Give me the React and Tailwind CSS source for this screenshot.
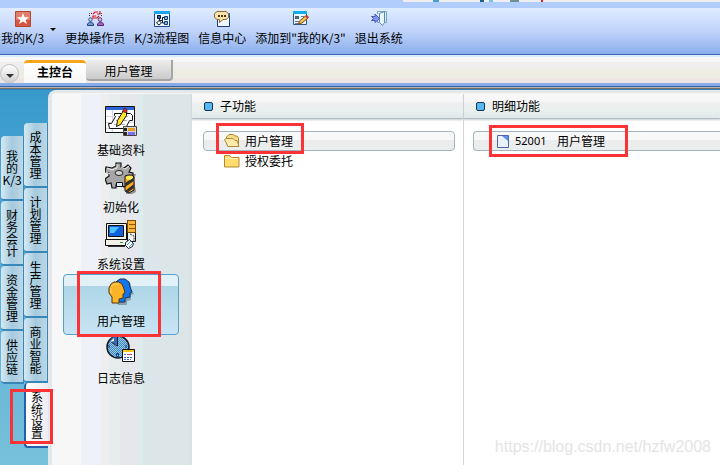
import { useState } from 'react'

function StarIcon() {
  return (
    <svg width="16" height="16" viewBox="0 0 16 16">
      <rect width="16" height="16" rx="1" fill="#b8432f" />
      <rect x="1" y="1" width="14" height="14" fill="#e0806c" />
      <rect x="1" y="9" width="14" height="6" fill="#d4573f" />
      <path d="M8 2l1.6 4.2H14l-3.4 2.7L12 13l-4-2.5L4 13l1.4-4.1L2 6.2h4.4z" fill="#fff" />
    </svg>
  )
}

function SwitchUserIcon() {
  return (
    <svg width="17" height="16" viewBox="0 0 17 16">
      <path d="M2.500 5V2.500H6M12 2.500h2.500V6" stroke="#333" strokeDasharray="1 1" fill="none" />
      <path d="M6 3l2-2h3M13 0v3h-3M12 5l-2 2H7M6 8V5h3" stroke="#e8151c" strokeWidth="1.200" fill="none" />
      <circle cx="3.500" cy="8.500" r="1.800" fill="#b9cbe5" stroke="#44608c" />
      <path d="M.5 14.500V13l2-2h2l2 2v1.500z" fill="#6c9bd5" stroke="#263f7c" />
      <circle cx="13" cy="8.500" r="1.800" fill="#d7c2df" stroke="#5b3d79" />
      <path d="M10.500 14.500V13l2-2h2l2 2v1.500z" fill="#a862bd" stroke="#4c2578" />
    </svg>
  )
}

function FlowIcon() {
  return (
    <svg width="16" height="16" viewBox="0 0 16 16">
      <path d="M.5.5h15v15H.5z" fill="#f4fbff" stroke="#1c4690" />
      <path d="M0 0h16v3H0z" fill="#19a5ed" />
      <path d="M5.500 6v3.500h3V12H10M8.500 9.500V6.500H10M5 9.500l-2.500 2.500L5 14l2.500-2z" fill="none" stroke="#06152e" />
      <path d="M3.500 4.500h3v3h-3z" fill="#3c63b8" stroke="#06152e" />
      <path d="M10.500 5.500h3v3h-3zM10.500 10.500h3v3h-3z" fill="#75bbed" stroke="#16366e" />
    </svg>
  )
}

function MessageIcon() {
  return (
    <svg width="17" height="16" viewBox="0 0 17 16">
      <path d="M3.500 2.500h12v13h-12z" fill="#f1f7ff" stroke="#1c3f7a" />
      <path d="M12 2h4v3h-4z" fill="#2367bd" />
      <path d="M3 .5h9l2.500 2v4l-2.500 2H9L5.500 11.500V8.500H3L.5 6.500v-4z" fill="#fae3aa" stroke="#8b6a36" />
      <path d="M4 4h2v2H4zM7 4h2v2H7zM10 4h2v2h-2z" fill="#4a371d" />
    </svg>
  )
}

function AddNoteIcon() {
  return (
    <svg width="16" height="15" viewBox="0 0 16 15">
      <path d="M.5.5h13v13H.5z" fill="#eef7ff" stroke="#34577f" />
      <path d="M0 0h14v3H0z" fill="#12aeea" />
      <path d="M2 5h4v3H2z" fill="#526276" />
      <path d="M8 5.500h3M2 10.500h4M2 12.500h3" stroke="#627997" />
      <path d="M5.500 13l1-3 6-5 2.500 2-6 5z" fill="#efc44e" stroke="#7c4b1a" />
      <path d="M12 5.500l2-1.500 2 2-1.500 2z" fill="#cf3b38" />
    </svg>
  )
}

function ExitIcon() {
  return (
    <svg width="16" height="16" viewBox="0 0 16 16">
      <path d="M6.500 3V.5h9v11H13M8 11.500H6.500V10" fill="none" stroke="#7aa5bd" />
      <path d="M8.500 2.500l5-2v11l-2 3-3-3z" fill="#e5f5fa" stroke="#5d8da7" />
      <path d="M.5 5.500H4V3l4.500 4.500-4.500 4V9.500H.5l2-2z" fill="#8295f1" stroke="#4658b5" />
    </svg>
  )
}

function BaseDataIcon() {
  return (
    <svg width="32" height="31" viewBox="0 0 32 31">
      <path d="M.5.5h29v26H.5z" fill="#fff" stroke="#111" />
      <path d="M1 1h28v3H1z" fill="#2b65d5" />
      <path d="M1 10.500h28M1 16.500h28M1 22.500h28M7.500 4v22" stroke="#d4d8e2" />
      <path d="M9.500 7.500h16l2 2v5h-3l-4 8H4.500l-1-5h3l4-7-1-1z" fill="#fff" stroke="#111" />
      <path d="M13 10.500h10M11 14.500h11M9 18.500h11" stroke="#aaa" />
      <path d="M11.500 20.500l1-6 6-10 3 2v3l-6 9z" fill="#ffe32c" stroke="#111" />
      <path d="M17.500 5.500l1.500-3 3 1v3.500z" fill="#e72f2e" stroke="#111" strokeWidth=".6" />
      <path d="M18.500 20.500h13v9h-13z" fill="#d9d6cf" stroke="#444" />
      <path d="M19 22h3v3h-3zM19 26h3v3h-3z" fill="#222" />
      <path d="M23 22h7v3h-7z" fill="#e59a20" />
      <path d="M23 26h7v3h-7z" fill="#7a70f0" />
    </svg>
  )
}

function InitIcon() {
  return (
    <svg width="32" height="32" viewBox="0 0 32 32">
      <path d="M24 12h7l-2 6 2 12-4 2h-6z" fill="#8e9396" />
      <path d="M11 1h5v4l3 1 4-3 3 3-2 4 4 1v5l-5 1-2 2 2 4-4 2-4-3-4 1v3H7l-1-5-4 1-2-5 4-3V11L0 10l1-5 6 1 4-2z" fill="#a6a6a6" stroke="#111" strokeWidth="1.200" />
      <path d="M12 2v4l-5 2-5-2M16 5l4 2 4-3M5 12l-4-2" fill="none" stroke="#eee" />
      <ellipse cx="14" cy="11" rx="4" ry="2.500" fill="#d2d2d2" stroke="#222" />
      <path d="M11.500 20.500h6v4h-6z" fill="#dce7f8" stroke="#111" />
      <path d="M20 14l3-1h4l2 2v13l-5 3-4-2z" fill="#ffae18" stroke="#161616" />
      <path d="M20 21l9-6v4l-9 6M20 29l9-7v4l-7 5" fill="#333" />
      <path d="M21 15l3-1h3l1 2-3 2-4-1z" fill="#fff15a" />
    </svg>
  )
}

function SystemIcon() {
  return (
    <svg width="32" height="30" viewBox="0 0 32 30">
      <path d="M22.500.5h8v21h-8z" fill="#eef1f3" stroke="#111" />
      <path d="M22.500.5h8v12h-8z" fill="#f9b43a" stroke="#7a4a00" />
      <path d="M24 4.500h6M24 8.500h6" stroke="#915000" />
      <path d="M1.500 3.500h20v16h-20zM.5 19.500h22v6H.5z" fill="#f4f2e8" stroke="#111" />
      <path d="M3.500 5.500h15v11h-15z" fill="#1262df" stroke="#111" />
      <path d="M5 7h9l-5 6H5z" fill="#4dc2ff" />
      <path d="M15 22h3v1h-3z" fill="#18a33c" />
      <path d="M3 26h17v1H3z" fill="#333" />
      <path d="M25 14l4 2v5l-4 1" fill="none" stroke="#333" strokeDasharray="2 1" />
      <path d="M20.500 22.500l4-3 4 4-1 3-4 2-3-3z" fill="#fff" stroke="#1c2440" />
      <path d="M22 25l4-4M24 27l4-4" stroke="#47a4d5" />
    </svg>
  )
}

function UsersIcon() {
  return (
    <svg width="26" height="28" viewBox="0 0 26 28">
      <path d="M8 4l4-3h7l3 3v5l3 5-3 1v5l-4 1v4H9z" fill="#555" opacity=".45" transform="translate(1 2)" />
      <path d="M6 7l3-4 3-2h5l4 3 1 5 2 5-2 1v4l-5 1v4H8z" fill="#1476ed" stroke="#123660" />
      <path d="M3 6l3-2h5l3 2 2 5 1 4-2 1v4l-4 1v4H4v-6l-3-4v-5z" fill="#ffb329" stroke="#4c350b" />
      <path d="M3 8l4-2h4M3 10v5" fill="none" stroke="#ffd56b" />
    </svg>
  )
}

function LogIcon() {
  return (
    <svg width="30" height="28" viewBox="0 0 30 28">
      <defs>
        <pattern id="dial" width="2" height="2" patternUnits="userSpaceOnUse">
          <path d="M0 0h2v2H0z" fill="#8fc8ee" />
          <path d="M0 0h1v1H0zM1 1h1v1H1z" fill="#4a88b4" />
        </pattern>
      </defs>
      <circle cx="12" cy="12" r="11" fill="url(#dial)" stroke="#111827" strokeWidth="1.500" />
      <path d="M11.500 2v9L4 5l3-3z" fill="#3869b5" />
      <path d="M11.500 2v9M4 6l7 5" stroke="#17233d" />
      <path d="M4 7l4-4v3z" fill="#fff" />
      <path d="M3 10v3M20 10v3M10.500 18.500h2v3h-2z" stroke="#153b82" fill="none" />
      <path d="M16.500 14.500h12v12h-12z" fill="#fff" stroke="#111" />
      <path d="M17 15h11v2H17z" fill="#f6c71e" />
      <path d="M18 19.500h9M18 22.500h9M18 24.500h7" stroke="#4862d8" strokeDasharray="2 1" />
      <path d="M22 19h3v1h-3z" fill="#e23b36" />
    </svg>
  )
}

function FolderIcon({ open }) {
  return (
    <svg width="16" height="14" viewBox="0 0 16 14">
      {open ? (
        <>
          <path d="M2.500 6V3L5 .5h4L11 2h2l1.500 2v8h-11z" fill="#f7dd85" stroke="#ad8738" />
          <path d="M.5 5.500L2 4.500h7L11 6.500h2l2 6H4z" fill="#ffecaa" stroke="#b28a36" />
        </>
      ) : (
        <>
          <path d="M.5 1.500h5l2 2h7.500v9.500H.5z" fill="#ffdc6c" stroke="#b38a32" />
          <path d="M1.500 4.500h12" stroke="#fff5bd" />
        </>
      )}
    </svg>
  )
}

function DocIcon() {
  return (
    <svg width="12" height="13" viewBox="0 0 12 13">
      <path d="M.5.5h11v12H.5z" fill="#eaf2ff" stroke="#5264a5" />
      <path d="M5 1h6v5z" fill="#5b8ff0" />
    </svg>
  )
}

const toolbar = [
  { label: '更换操作员', Icon: SwitchUserIcon },
  { label: 'K/3流程图', Icon: FlowIcon },
  { label: '信息中心', Icon: MessageIcon },
  { label: '添加到"我的K/3"', Icon: AddNoteIcon },
  { label: '退出系统', Icon: ExitIcon },
]

const outerTabs = ['我的K/3', '财务会计', '资金管理', '供应链']
const innerTabs = ['成本管理', '计划管理', '生产管理', '商业智能', '系统设置']

const modules = [
  { label: '基础资料', Icon: BaseDataIcon },
  { label: '初始化', Icon: InitIcon },
  { label: '系统设置', Icon: SystemIcon },
  { label: '用户管理', Icon: UsersIcon },
  { label: '日志信息', Icon: LogIcon },
]

function Mark({ className }) {
  return <span className={`absolute z-10 border-3 border-[#fb3236] pointer-events-none ${className}`} />
}

function Toolbar() {
  return (
    <header>
      <div className="h-[2px] bg-[#b1cdfb] flex justify-end">
        <div className="w-[44%] bg-[#efeef1] flex">
          <span className="ml-[30px] w-[6px] bg-[#4a9cd0]" />
          <span className="ml-[41px] w-1 bg-[#17637f]" />
          <span className="ml-[5px] w-1 bg-[#76c3df]" />
          <span className="ml-[17px] w-[9px] bg-[#6a9195]" />
          <span className="ml-[22px] w-[2px] bg-[#f01b24]" />
        </div>
      </div>
      <div className="h-[6px] bg-[#b1cdfb]" />
      <div className="h-[46px] bg-linear-to-b from-[#e0edff] via-[#c0d4fa] to-[#8aadeb] flex items-start gap-[9px] pl-[1px] pt-[3px]">
        <div className="flex">
          <button className="flex flex-col items-center gap-[3px] whitespace-nowrap leading-4">
            <span className="h-4"><StarIcon /></span>
            我的K/3
          </button>
          <button aria-label="更多" className="ml-[6px] mt-[17px] h-[3px] border-x-3 border-t-3 border-x-transparent border-t-black" />
        </div>
        {toolbar.map(({ label, Icon }) => (
          <button key={label} className="flex flex-col items-center gap-[3px] whitespace-nowrap leading-4">
            <span className="h-4"><Icon /></span>
            {label}
          </button>
        ))}
      </div>
      <div className="h-px bg-[#3a65b0]" />
      <div className="h-[2px] bg-[#dceafd]" />
    </header>
  )
}

function PageTabs() {
  return (
    <nav>
      <div className="h-[26px] flex items-start pt-[3px] bg-[linear-gradient(#f7f7f9_5px,#eeeeef_5px,#eeeeef_11px,#eeede4_11px,#eeede4_21px,#efe5e3_21px)]">
        <button aria-label="菜单" className="mt-1 w-[19px] h-[19px] rounded-full border border-[#c2c2c2] bg-linear-to-b from-white to-[#d2d2d2] flex items-center justify-center">
          <span className="mt-1 border-x-4 border-t-4 border-x-transparent border-t-[#333]" />
        </button>
        <button className="ml-[5px] w-[62px] h-[23px] pb-[2px] rounded-t-sm border-t-3 border-[#f9a51b] bg-linear-to-b from-white to-[#f7f7f7] font-bold leading-4">主控台</button>
        <button className="w-[87px] h-[21px] pt-[3px] rounded-b-sm border-r-2 border-b-2 border-[#a5a5a5] bg-linear-to-b from-[#ededed] to-[#cbcbcb] leading-4">用户管理</button>
      </div>
      <div className="h-[3px] bg-[#86abe9]" />
      <div className="h-px bg-[#3a62ac]" />
      <div className="h-px bg-[#b6b5ac]" />
      <div className="h-px bg-[#756f63]" />
      <div className="h-px bg-[#3480b5]" />
    </nav>
  )
}

function SideTab({ label, active, onClick }) {
  return (
    <button
      onClick={onClick}
      className={`w-full flex items-center justify-center rounded-l-sm border-b-2 ${
        active
          ? 'bg-linear-to-r from-white to-[#ececf2] border-[#2461ac] border-l-2'
          : 'bg-linear-to-r from-[#d5e9f4] via-[#a5cade] to-[#bdd7e5] border-[#3787b8] border-r'
      }`}
    >
      <span className="w-5 leading-3">{label}</span>
    </button>
  )
}

function SideTabs() {
  const [outer, setOuter] = useState('')
  const [inner, setInner] = useState('系统设置')
  return (
    <aside className="w-12 shrink-0 flex items-start pl-[1px]">
      <div className="w-[23px] mt-[46px] grid grid-rows-[65px_65px_65px_53px]">
        {outerTabs.map((t) => <SideTab key={t} label={t} active={t === outer} onClick={() => setOuter(t)} />)}
      </div>
      <div className="relative w-6 mt-[33px] grid auto-rows-[65px]">
        {innerTabs.map((t) => <SideTab key={t} label={t} active={t === inner} onClick={() => setInner(t)} />)}
        <Mark className="-left-[14px] bottom-1 w-[43px] h-[55px]" />
      </div>
    </aside>
  )
}

function ModuleList() {
  const [current, setCurrent] = useState('用户管理')
  return (
    <div className="w-[138px] shrink-0 flex flex-col items-center pt-[9px] bg-[linear-gradient(90deg,#f7f7f7_29px,#eef1f7_29px,#eef1f7_49px,#eeeeee_49px,#eeeeee_57px,#e5eeec_57px,#e5eeec_68px,#e5e7ec_68px,#e5e7ec_86px,#dcebec_86px,#dcebec_91px,#dce5e7_91px)]">
      {modules.map(({ label, Icon }) => (
        <button
          key={label}
          onClick={() => setCurrent(label)}
          className={`relative w-[116px] -mb-1 h-[61px] rounded-sm border flex flex-col items-center justify-between pt-[1px] pb-[5px] leading-4 ${
            label === current
              ? 'border-[#5a9fc9] bg-[linear-gradient(#e2f0f7_11px,#add6e6_11px,#c9e4f4)]'
              : 'border-transparent'
          }`}
        >
          <span className="h-8 flex items-center"><Icon /></span>
          {label}
          {label === '用户管理' && <Mark className="-top-1 left-[13px] w-[84px] h-[66px]" />}
        </button>
      ))}
    </div>
  )
}

function ColumnHeader({ children }) {
  return (
    <h2 className="h-[25px] flex items-center gap-[7px] pl-3 border-b border-[#aebfc1] bg-[linear-gradient(#f7f7f7_8px,#eeeff0_8px,#eaf1ef_16px,#dfe9e9)] shadow-[0_1px_2px_#c8cccc]">
      <span className="w-[9px] h-[9px] rounded-xs border border-[#17324d] bg-[#56b9f6]" />
      {children}
    </h2>
  )
}

const selectedRow = 'border-[#a3b5ba] bg-[linear-gradient(#f8f8f8_8px,#ececec_8px,#e9eeee)]'

function SubFunctions() {
  return (
    <section className="w-[274px] shrink-0 border-l-2 border-r border-l-[#dbe2e4] border-r-[#d4d4dc]">
      <ColumnHeader>子功能</ColumnHeader>
      <div className="pt-3 pl-[11px] pr-2">
        <button className={`relative w-full h-5 flex items-center gap-[5px] pl-5 rounded-sm border ${selectedRow}`}>
          <FolderIcon open />
          用户管理
          <Mark className="left-3 -top-[9px] w-[88px] h-[31px]" />
        </button>
        <button className="w-full h-5 flex items-center gap-[5px] pl-5 border border-transparent">
          <FolderIcon />
          授权委托
        </button>
      </div>
    </section>
  )
}

function DetailFunctions() {
  return (
    <section className="flex-1 min-w-0">
      <ColumnHeader>明细功能</ColumnHeader>
      <div className="pt-3 pl-[9px]">
        <button className={`relative w-full h-5 flex items-center pl-[23px] rounded-l-sm border border-r-0 ${selectedRow}`}>
          <DocIcon />
          <span className="ml-[6px] w-[42px] text-left text-[11px] font-['Noto_Sans',sans-serif]">52001</span>
          用户管理
          <Mark className="left-[15px] -top-[7px] w-[139px] h-8" />
        </button>
      </div>
    </section>
  )
}

export default function App() {
  return (
    <div className="relative min-h-screen flex flex-col overflow-hidden bg-white text-black text-xs font-['Noto_Sans_CJK_SC',sans-serif]">
      <Toolbar />
      <PageTabs />
      <main className="flex-1 flex bg-linear-to-b from-[#379acc] to-[#78c1dc]">
        <SideTabs />
        <div className="flex-1 flex flex-col min-w-0 rounded-tl-lg overflow-hidden border-l-4 border-t-3 border-[#e5e8ea] bg-white">
          <div className="h-px bg-[#f7f7f7]" />
          <div className="flex-1 flex">
            <ModuleList />
            <SubFunctions />
            <DetailFunctions />
          </div>
        </div>
      </main>
      <p className="absolute right-[9px] bottom-2 text-base leading-5 text-[#e4e4e4] font-['Liberation_Sans',sans-serif]">https://blog.csdn.net/hzfw2008</p>
    </div>
  )
}
